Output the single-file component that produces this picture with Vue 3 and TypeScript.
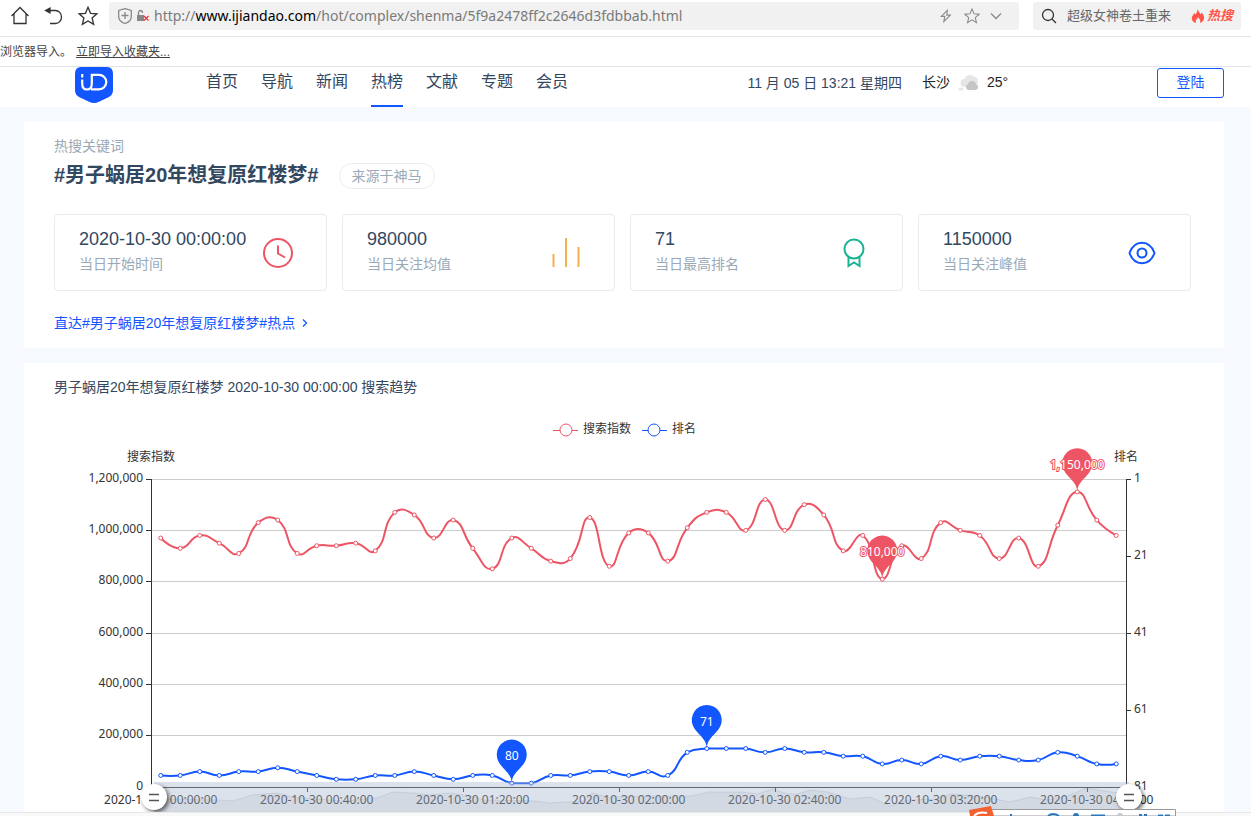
<script setup lang="ts">
import { computed, onBeforeUnmount, onMounted, ref } from 'vue'

type Point = [number, number]

const navItems = ['首页', '导航', '新闻', '热榜', '文献', '专题', '会员']
const activeNav = ref('热榜')
const keyword = '男子蜗居20年想复原红楼梦'
const stats = [
  { value: '2020-10-30 00:00:00', label: '当日开始时间', icon: 'clock' },
  { value: '980000', label: '当日关注均值', icon: 'bars' },
  { value: '71', label: '当日最高排名', icon: 'medal' },
  { value: '1150000', label: '当日关注峰值', icon: 'eye' },
]

// Search index in thousands and list position, one sample every five minutes
const indexData = [
  970, 930, 980, 950, 910, 1030, 1040, 910, 940, 940, 950, 920, 1070, 1060, 970, 1040, 930, 850, 970, 930, 880, 890,
  1050, 860, 990, 990, 880, 1010, 1070, 1070, 1000, 1120, 1000, 1100, 1060, 920, 980, 810, 940, 890, 1030, 1000, 980,
  890, 970, 860, 1020, 1150, 1040, 980,
]
const rankData = [
  78, 78, 77, 78, 77, 77, 76, 77, 78, 79, 79, 78, 78, 77, 78, 79, 78, 78, 80, 80, 78, 78, 77, 77, 78, 77, 78, 72, 71,
  71, 71, 72, 71, 72, 72, 73, 73, 75, 74, 75, 73, 74, 73, 73, 74, 74, 72, 73, 75, 75,
]
// Overview curve of the zoom slider: [per-mille of width, height above the base]
const overview: Point[] = [
  [0, 13], [68, 12], [81, 11], [101, 17], [126, 19], [142, 15], [194, 11], [229, 14], [245, 20], [266, 19], [283, 17],
  [304, 19], [324, 16], [338, 12], [390, 11], [406, 9], [441, 11], [449, 19], [465, 15], [522, 16], [550, 16],
  [570, 20], [602, 20], [619, 18], [634, 23], [650, 18], [660, 18], [673, 22], [691, 20], [714, 13], [735, 15],
  [755, 6], [773, 12], [803, 13], [817, 18], [847, 16], [878, 10], [899, 15], [916, 12], [937, 16], [957, 24],
  [988, 19], [1000, 16],
]

const host = ref<HTMLElement | null>(null)
const width = ref(1200)
let observer: ResizeObserver | undefined
onMounted(() => {
  observer = new ResizeObserver(() => {
    if (host.value) width.value = host.value.clientWidth
  })
  if (host.value) observer.observe(host.value)
})
onBeforeUnmount(() => observer?.disconnect())

const left = 127
const top = 68
const bottom = 376
const right = computed(() => width.value - 98)
const band = computed(() => (right.value - left) / indexData.length)
const centre = (i: number) => left + band.value * (i + 0.5)
const indexY = (v: number) => bottom - (v / 1200) * (bottom - top)
const rankY = (v: number) => top + ((v - 1) / 80) * (bottom - top)
const indexPoints = computed<Point[]>(() => indexData.map((v, i) => [centre(i), indexY(v)]))
const rankPoints = computed<Point[]>(() => rankData.map((v, i) => [centre(i), rankY(v)]))

function smoothPath(pts: Point[]): string {
  const ys = pts.map((p) => p[1])
  const lo = Math.min(...ys)
  const hi = Math.max(...ys)
  const clamp = (y: number) => Math.min(hi, Math.max(lo, y))
  let d = `M${pts[0][0]} ${pts[0][1]}`
  let out: Point = pts[0]
  for (let i = 1; i < pts.length; i++) {
    const p = pts[i]
    let into: Point = p
    let nextOut: Point = p
    if (i < pts.length - 1) {
      const a = pts[i - 1]
      const b = pts[i + 1]
      const lenA = Math.hypot(p[0] - a[0], p[1] - a[1])
      const lenB = Math.hypot(p[0] - b[0], p[1] - b[1])
      const t = lenB / (lenA + lenB)
      const vx = (b[0] - a[0]) / 2
      const vy = (b[1] - a[1]) / 2
      into = [p[0] - vx * (1 - t), clamp(p[1] - vy * (1 - t))]
      nextOut = [p[0] + vx * t, clamp(p[1] + vy * t)]
    }
    d += `C${out[0]} ${out[1]} ${into[0]} ${into[1]} ${p[0]} ${p[1]}`
    out = nextOut
  }
  return d
}

function pinPath([x, y]: Point): string {
  const r = 15
  const dy = (r * r) / 35
  const cy = y - 35 + dy
  const angle = Math.asin(dy / r)
  const dx = Math.cos(angle) * r
  const tx = Math.sin(angle) * r * 0.6
  const ty = Math.cos(angle) * r * 0.6
  const ey = cy + dy
  return `M${x - dx} ${ey}A${r} ${r} 0 1 1 ${x + dx} ${ey}C${x + dx - tx} ${ey + ty} ${x} ${y - 10} ${x} ${y}C${x} ${y - 10} ${x - dx + tx} ${ey + ty} ${x - dx} ${ey}Z`
}

const series = computed(() => [
  { color: '#ee5564', points: indexPoints.value, path: smoothPath(indexPoints.value) },
  { color: '#1256ff', points: rankPoints.value, path: smoothPath(rankPoints.value) },
])
const pins = computed(() => [
  { color: '#ee5564', text: '1,150,000', at: indexPoints.value[47] },
  { color: '#ee5564', text: '810,000', at: indexPoints.value[37] },
  { color: '#1256ff', text: '80', at: rankPoints.value[18] },
  { color: '#1256ff', text: '71', at: rankPoints.value[28] },
])
const crisp = (v: number) => Math.floor(v) + 0.5
const leftTicks = [0, 200, 400, 600, 800, 1000, 1200].map((v) => ({
  y: crisp(indexY(v)),
  text: (v * 1000).toLocaleString('en-US'),
}))
const rightTicks = [1, 21, 41, 61, 81].map((v) => ({ y: crisp(rankY(v)), text: String(v) }))
const timeTicks = computed(() =>
  ['00:00:00', '00:40:00', '01:20:00', '02:00:00', '02:40:00', '03:20:00', '04:00:00'].map((t, i) => ({
    tick: crisp(left + band.value * i * 8),
    x: centre(i * 8),
    text: `2020-10-30 ${t}`,
  })),
)
const sliderTop = 371
const sliderBottom = 401
const sliderLeft = left + 3
const sliderRight = computed(() => right.value + 3)
const overviewPath = computed(() => {
  const span = sliderRight.value - sliderLeft
  const line = overview.map(([x, h]) => `${sliderLeft + (x / 1000) * span} ${sliderBottom - h}`).join('L')
  return {
    line: `M${line}`,
    area: `M${sliderLeft} ${sliderBottom}L${line}L${sliderRight.value} ${sliderBottom}Z`,
  }
})
</script>

<template>
  <div class="window">
    <div class="toolbar">
      <button class="tool home" aria-label="主页">
        <svg width="20" height="20" viewBox="0 0 20 20"><path d="M1.5 10 10 1.5l8.500 8.500M4 8v9.500h12V8" /></svg>
      </button>
      <button class="tool back" aria-label="后退">
        <svg width="20" height="20" viewBox="0 0 20 20"><path d="M4 4.500h7.500a6 6.500 0 0 1 0 13H6" /><path class="solid" d="M1.500 4.500 6 2v5z" /></svg>
      </button>
      <button class="tool star" aria-label="收藏">
        <svg width="20" height="20" viewBox="0 0 20 20"><path d="m10 1.300 2.600 6 6.300.5-4.800 4.200 1.500 6.300-5.600-3.400-5.600 3.400 1.500-6.300-4.800-4.200 6.300-.5z" /></svg>
      </button>
      <div class="address">
        <svg class="grey" width="14" height="16" viewBox="0 0 14 16"><path d="M7 .7 13.300 2.500v6C13.300 12 10 14.500 7 15.500 4 14.500.7 12 .7 8.500v-6zM7 4v7M3.500 7.500h7" /></svg>
        <svg class="lock" width="14" height="14" viewBox="0 0 14 14"><rect x="1" y="6" width="7" height="6" fill="#888" /><path d="M2.500 6V4a2 2.500 0 0 1 4 0" stroke="#888" stroke-width="1.300" fill="none" /><path d="m8 7 4.500 4.500m0-4.500L8 11.500" stroke="#e0353c" stroke-width="1.200" /></svg>
        <div class="url" role="textbox" aria-label="地址栏" tabindex="0">http://<b>www.ijiandao.com</b>/hot/complex/shenma/5f9a2478ff2c2646d3fdbbab.html</div>
        <button class="mini" aria-label="极速模式"><svg width="12" height="14" viewBox="0 0 14 16"><path d="M8.500 1.500 1.500 8.500h4L4.500 14.500l7.500-7.500H8z" /></svg></button>
        <button class="mini gap" aria-label="添加收藏"><svg width="16" height="16" viewBox="0 0 20 20"><path d="m10 1.300 2.600 6 6.300.5-4.800 4.200 1.500 6.300-5.600-3.400-5.600 3.400 1.500-6.300-4.800-4.200 6.300-.5z" /></svg></button>
        <button class="mini" aria-label="展开"><svg width="12" height="16" viewBox="0 0 12 16"><path d="m1 5.500 5 5 5-5" /></svg></button>
      </div>
      <label class="search">
        <svg width="16" height="16" viewBox="0 0 16 16"><circle cx="7" cy="7" r="5.500" /><path d="m11 11 4 4" /></svg>
        <input type="text" placeholder="超级女神卷土重来" aria-label="搜索" />
        <span class="hot">
          <svg width="14" height="14" viewBox="0 0 14 14"><path d="M6.500 0C7.500 3 9 3.500 9.500 5.500L10.500 3.500C12.500 6 14 8 12.500 11 11.800 12.500 10.500 13.500 9 14 10 11.500 8.500 10 7 8 6.500 10 4 11 5 14 2.500 13.500 0 11 1 8 1.500 6.500 2.500 6 3 4L4.500 5.500C5.500 4 6.500 2.500 6.500 0Z" /></svg>热搜
        </span>
      </label>
    </div>
    <div class="import">浏览器导入。<a href="#import">立即导入收藏夹...</a></div>

    <header class="site">
      <a class="logo" href="#home" aria-label="JD">
        <svg width="38" height="36" viewBox="0 0 38 36"><path fill="#1256ff" d="M6 0h26q6 0 6 7v16q0 5-4 7l-10 4.800q-5 2.400-10 0L4 30Q0 28 0 23V7Q0 0 6 0Z" /><path fill="none" stroke="#fff" stroke-width="2.200" d="M7.200 7v3.500M7.200 12.500v4q0 6 4.800 6t4.800-6V7.800h7.200a7.300 7.300 0 0 1 0 14.600h-8" /></svg>
      </a>
      <nav>
        <a v-for="item in navItems" :key="item" href="#nav" :class="{ active: item === activeNav }" @click.prevent="activeNav = item">{{ item }}</a>
      </nav>
      <time class="date">11 月 05 日 13:21 星期四</time>
      <span class="city">长沙</span>
      <svg class="cloud" width="22" height="18" viewBox="0 0 22 18"><g fill="#e6e6e6"><circle cx="12" cy="7" r="6" /><circle cx="6.500" cy="9" r="4" /><circle cx="16" cy="7" r="4" /><ellipse cx="3" cy="15" rx="2.500" ry="1.500" /></g><g fill="#c6c6c6"><circle cx="14" cy="11" r="4" /><rect x="8" y="10" width="12" height="6" rx="3" /></g></svg>
      <span class="temp">25°</span>
      <button class="login">登陆</button>
    </header>

    <main>
      <section class="panel summary">
        <p class="caption">热搜关键词</p>
        <div class="heading">
          <h1>#{{ keyword }}#</h1>
          <span class="tag">来源于神马</span>
        </div>
        <div class="cards">
          <article v-for="s in stats" :key="s.label" class="card">
            <div>
              <strong>{{ s.value }}</strong>
              <p>{{ s.label }}</p>
            </div>
            <svg width="32" height="32" viewBox="0 0 32 32" fill="none" stroke-width="2">
              <g v-if="s.icon === 'clock'" stroke="#ee5564"><circle cx="16" cy="16" r="14" /><path d="M16 8.500v8l7 4" /></g>
              <g v-else-if="s.icon === 'bars'" stroke="#f5b04e"><path d="M3.500 17v13M16 1v29M28.500 10v20" /></g>
              <g v-else-if="s.icon === 'medal'" stroke="#1cb394"><circle cx="16" cy="12" r="9.500" /><path d="M10.500 20v9l5.500-3.500 5.500 3.500v-9" /></g>
              <g v-else stroke="#1256ff"><path d="M3.500 16C6 9 10.500 5.800 16 5.800S26 9 28.500 16C26 23 21.500 26.200 16 26.200S6 23 3.500 16Z" /><circle cx="16" cy="16" r="4.500" /></g>
            </svg>
          </article>
        </div>
        <a class="direct" href="#hot">直达#{{ keyword }}#热点<svg width="6" height="10" viewBox="0 0 6 10"><path d="m1 1.500 3.500 3.500L1 8.500" fill="none" stroke="#1256ff" stroke-width="1.300" /></svg></a>
      </section>

      <section class="panel trend">
        <h2>{{ keyword }} 2020-10-30 00:00:00 搜索趋势</h2>
        <div ref="host" class="chart">
          <svg :width="width" height="420" role="img" aria-label="搜索趋势">
            <g :transform="`translate(${width / 2}, 0)`">
              <g fill="#fff"><path d="M-71 19.500h25" stroke="#ee5564" /><circle cx="-58" cy="19" r="6" stroke="#ee5564" /><path d="M18 19.500h25" stroke="#1256ff" /><circle cx="30" cy="19" r="6" stroke="#1256ff" /></g>
              <text x="-41" y="22">搜索指数</text>
              <text x="48" y="22">排名</text>
            </g>
            <text :x="left" y="50" text-anchor="middle">搜索指数</text>
            <text :x="right" y="50" text-anchor="middle">排名</text>
            <path v-for="t in leftTicks" :key="t.text" :d="`M${left} ${t.y}H${right}`" stroke="#ccc" />
            <path :d="`M${left + 0.5} ${top}V${bottom}M${right + 0.5} ${top}V${bottom}M${left} ${bottom + 0.5}H${right}`" stroke="#333" />
            <g v-for="t in leftTicks" :key="t.text"><path :d="`M${left - 5} ${t.y}h5`" stroke="#333" /><text :x="left - 8" :y="t.y + 2" text-anchor="end">{{ t.text }}</text></g>
            <g v-for="t in rightTicks" :key="t.text"><path :d="`M${right} ${t.y}h5`" stroke="#333" /><text :x="right + 8" :y="t.y + 2">{{ t.text }}</text></g>
            <g v-for="t in timeTicks" :key="t.text"><path :d="`M${t.tick} ${bottom}v5`" stroke="#333" /><text :x="t.x" y="393" text-anchor="middle">{{ t.text }}</text></g>
            <g v-for="s in series" :key="s.color" :stroke="s.color">
              <path :d="s.path" fill="none" stroke-width="2" />
              <circle v-for="(p, i) in s.points" :key="i" :cx="p[0]" :cy="p[1]" r="2" fill="#fff" />
            </g>
            <g v-for="p in pins" :key="p.text">
              <path :d="pinPath(p.at)" :fill="p.color" />
              <text class="pin" :x="p.at[0]" :y="p.at[1] - 23" :stroke="p.color" text-anchor="middle">{{ p.text }}</text>
            </g>
            <path :d="overviewPath.area" fill="#2f4554" fill-opacity="0.08" />
            <path :d="overviewPath.line" fill="none" stroke="#2f4554" stroke-opacity="0.15" stroke-width="1" />
            <rect :x="sliderLeft" :y="sliderTop" :width="sliderRight - sliderLeft" :height="sliderBottom - sliderTop" fill="#a7b7cc" fill-opacity="0.4" />
            <g v-for="x in [sliderLeft, sliderRight]" :key="x" class="handle">
              <circle :cx="x" cy="386" r="13" fill="#fff" />
              <path :d="`M${x - 5} 383.500h10M${x - 5} 389.500h10`" stroke="#555" stroke-width="1.500" />
            </g>
          </svg>
        </div>
      </section>
    </main>
    <footer class="status"></footer>
    <div class="ime">
      <svg width="208" height="10" viewBox="0 0 208 10"><path d="M20 3.500h187.500V10H20z" fill="#fff" stroke="#999" /><path d="M1 4 23 0l3 10H2z" fill="#f4602f" /><path d="M6 10q4-5 13-3" fill="none" stroke="#fff" stroke-width="2" /><g fill="none" stroke="#2878be" stroke-width="2"><path d="M43 8v2M80 10q5-4 11 0M123 9.500h14M171 9h3M176 9h3M190 9.500h5M197 9.500h5" /></g><circle cx="108" cy="10" r="3" fill="#2878be" /><circle cx="152" cy="10" r="3" fill="#c4c9d0" /></svg>
    </div>
  </div>
</template>

<style>
html,
body {
  overflow: hidden;
}
</style>

<style scoped>
* {
  box-sizing: border-box;
}
.window {
  position: relative;
  display: flex;
  flex-direction: column;
  height: 100vh;
  overflow: hidden;
  background: #f6faff;
  color: #33475f;
  font: 14px/20px 'Liberation Sans', 'Noto Sans CJK SC', sans-serif;
}
svg {
  display: block;
  flex: none;
}
button {
  padding: 0;
  border: 0;
  background: none;
  font: inherit;
  cursor: pointer;
}
a {
  color: inherit;
  text-decoration: none;
}
h1,
h2,
p {
  margin: 0;
}
.toolbar {
  display: flex;
  align-items: center;
  flex: none;
  height: 37px;
  padding: 0 10px 4px;
  border-bottom: 1px solid #e1e5e9;
  background: #fff;
}
.tool svg,
.mini svg,
.grey,
.search > svg {
  fill: none;
  stroke: #333;
  stroke-width: 1.3;
}
.tool svg .solid {
  fill: #333;
}
.back {
  margin: 0 14px;
}
.star {
  margin-right: 11px;
}
.address,
.search {
  display: flex;
  align-items: center;
  height: 28px;
  border-radius: 3px;
  background: #f1f1f1;
}
.address {
  flex: 1;
  min-width: 0;
  padding: 0 17px 0 9px;
}
.address .grey {
  stroke: #888;
}
.lock {
  margin: 0 4px;
}
.url {
  flex: 1;
  overflow: hidden;
  color: #7a7a7a;
  font: 14px/20px 'Noto Sans', sans-serif;
  white-space: nowrap;
}
.url b {
  color: #000;
  font-weight: 400;
}
.mini svg {
  stroke: #888;
}
.mini.gap {
  margin: 0 10px 0 12px;
}
.search {
  width: 208px;
  margin-left: 14px;
  padding: 0 8px;
}
.search input {
  flex: 1;
  min-width: 0;
  margin: 0 0 0 10px;
  padding: 0;
  border: 0;
  outline: 0;
  background: none;
  font: 13px/20px 'Liberation Sans', 'Noto Sans CJK SC', sans-serif;
}
.search input::placeholder {
  color: #666;
  opacity: 1;
}
.hot {
  display: flex;
  align-items: center;
  gap: 2px;
  color: #ff5548;
  font-size: 13px;
  font-style: italic;
  font-weight: 700;
}
.hot svg {
  fill: #ff5548;
}
.import {
  flex: none;
  height: 30px;
  border-bottom: 1px solid #e1e5e9;
  background: #fff;
  color: #444;
  font-size: 12px;
  line-height: 30px;
}
.import a {
  margin-left: 4px;
  text-decoration: underline;
}
.site {
  display: flex;
  flex: none;
  height: 40px;
  padding: 0 27px 0 75px;
  background: #fff;
  line-height: 30px;
}
nav {
  display: flex;
  gap: 23px;
  margin: 0 auto 0 93px;
  font-size: 16px;
}
nav a {
  height: 40px;
}
nav a.active {
  border-bottom: 2px solid #1256ff;
}
.date {
  margin-right: 20px;
  line-height: 32px;
}
.city,
.temp {
  color: #222;
}
.cloud {
  margin: 7px 7px 0 8px;
}
.temp {
  width: 23px;
}
.login {
  width: 67px;
  height: 30px;
  margin: 1px 0 0 147px;
  padding-bottom: 2px;
  border: 1px solid #1256ff;
  border-radius: 3px;
  color: #1256ff;
  line-height: 26px;
}
main {
  display: flex;
  flex: 1;
  flex-direction: column;
  gap: 15px;
  min-height: 0;
  padding: 15px 27px 0 24px;
}
.panel {
  background: #fff;
}
.summary {
  flex: none;
  padding: 14px 33px 15px 30px;
}
.caption,
.card p {
  color: #99a9b8;
}
.heading {
  display: flex;
  align-items: center;
  gap: 20px;
  height: 40px;
}
h1 {
  padding-bottom: 2px;
  font-size: 20px;
  line-height: 30px;
}
.tag {
  padding: 0 12px;
  border: 1px solid #e9ecf2;
  border-radius: 13px;
  color: #99a9b8;
  line-height: 24px;
}
.cards {
  display: grid;
  grid-template-columns: repeat(4, 1fr);
  gap: 15px;
  margin-top: 18px;
}
.card {
  display: flex;
  align-items: center;
  justify-content: space-between;
  height: 77px;
  padding: 0 32px 0 24px;
  border: 1px solid #e8eaf2;
  border-radius: 4px;
}
.card > div {
  padding-bottom: 8px;
}
.card strong {
  display: block;
  font-size: 18px;
  font-weight: 400;
  line-height: 30px;
}
.direct {
  display: inline-flex;
  align-items: center;
  gap: 7px;
  margin-top: 22px;
  color: #1256ff;
}
.trend {
  flex: 1;
  min-height: 0;
  overflow: hidden;
}
h2 {
  padding: 14px 30px;
  font-size: 14px;
  font-weight: 400;
  line-height: 20px;
}
.chart text {
  fill: #333;
  font: 12px 'Noto Sans', 'Noto Sans CJK SC', sans-serif;
}
.chart text.pin {
  fill: #fff;
  stroke-width: 2px;
  paint-order: stroke;
}
.handle circle {
  filter: drop-shadow(2px 2px 2px rgba(0, 0, 0, 0.6));
}
.status {
  flex: none;
  height: 4px;
  border-top: 1px solid #e9e9e9;
  background: #f9f9f9;
}
.ime {
  position: absolute;
  right: 75px;
  bottom: 0;
}
</style>
